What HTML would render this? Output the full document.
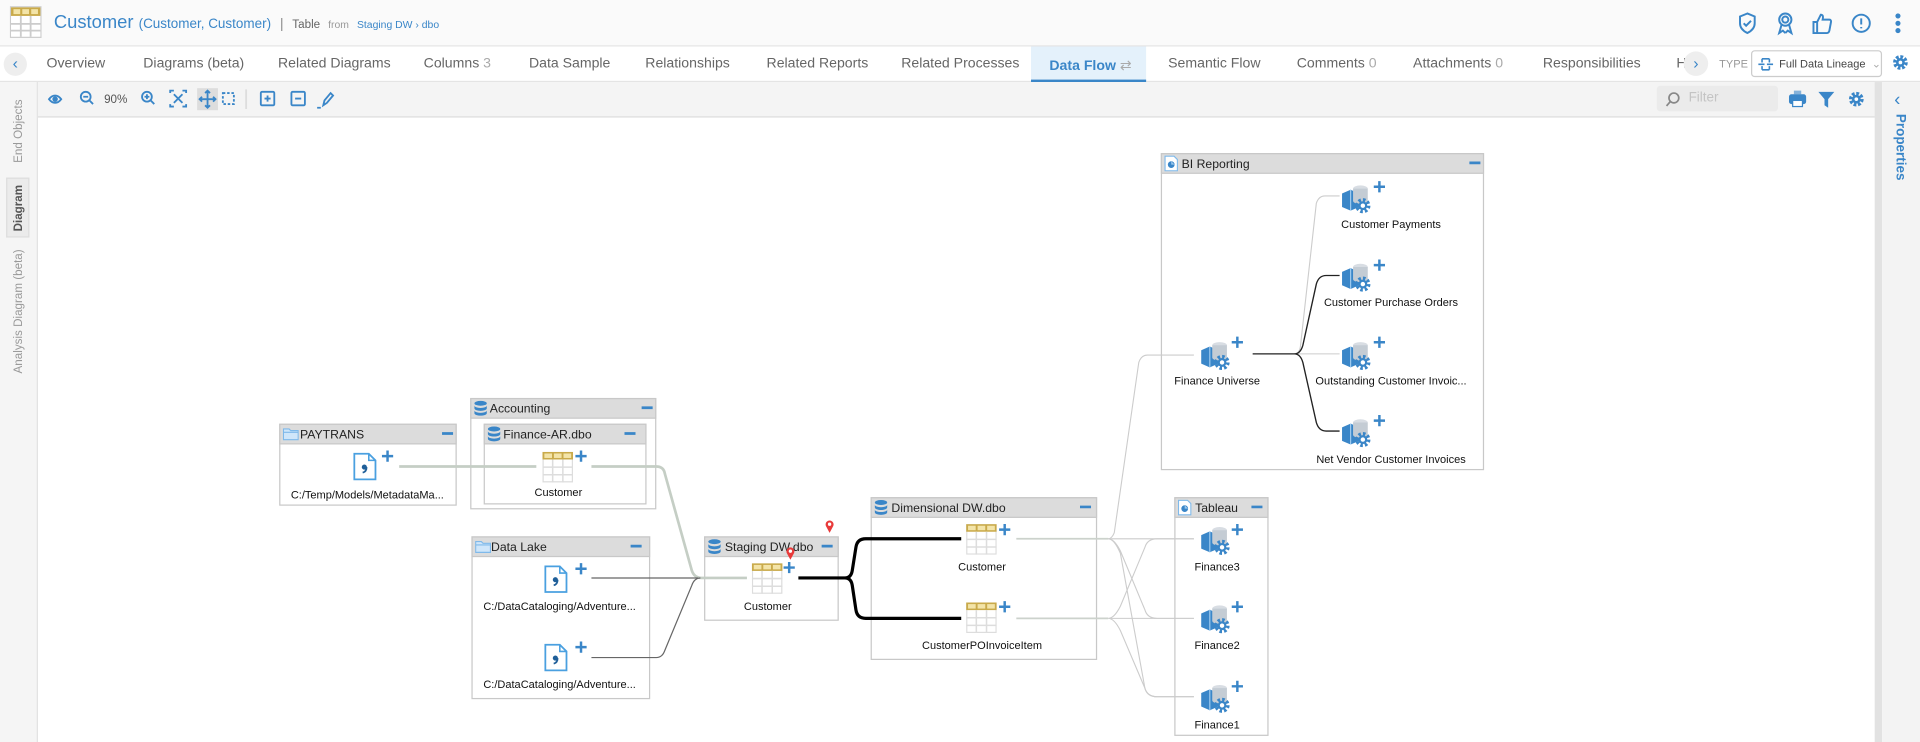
<!DOCTYPE html>
<html><head><meta charset="utf-8">
<style>
*{box-sizing:border-box;margin:0;padding:0}
html,body{width:1920px;height:742px;overflow:hidden;background:#fff;font-family:"Liberation Sans",sans-serif}
#w{position:absolute;left:0;top:0;width:1568px;height:606px;transform:scale(1.22449);transform-origin:0 0;background:#fff}
.abs{position:absolute}
#hdr{left:0;top:0;width:1568px;height:38px;background:#fafafa;border-bottom:1px solid #e4e4e4}
#tabs{left:0;top:38px;width:1568px;height:29px;background:#fff;border-bottom:1px solid #e4e4e4}
.tab{position:absolute;top:8px;font-size:11.5px;color:#666}
.tab .n{color:#aaa}
#tb{left:31px;top:67px;width:1501px;height:29px;background:#f4f4f4;border-bottom:1px solid #ddd}
#ls{left:0;top:67px;width:31px;height:539px;background:#f5f5f5;border-right:1px solid #e2e2e2}
#rs{left:1537px;top:67px;width:31px;height:539px;background:#f3f3f3}
#sb{left:1531px;top:67px;width:6px;height:539px;background:#e2e2e2}
.vt{position:absolute;transform:rotate(-90deg);transform-origin:0 0;font-size:9.5px;color:#999;white-space:nowrap}
</style></head><body><div id="w">
<div id="hdr" class="abs">
 <svg class="abs" style="left:8px;top:5px" width="26" height="26" viewBox="0 0 26 26">
  <rect x="0.5" y="0.5" width="25" height="25" fill="#fff" stroke="#ccc"/>
  <rect x="1" y="1" width="24" height="7" fill="#c9aa4a"/>
  <rect x="3" y="2.5" width="5.5" height="4" fill="#f3e4a8"/><rect x="10.2" y="2.5" width="5.5" height="4" fill="#f3e4a8"/><rect x="17.5" y="2.5" width="5.5" height="4" fill="#f3e4a8"/>
  <path d="M1 14.5H25M1 20H25M9 8V25M17 8V25" stroke="#ccc" stroke-width="1.5"/>
 </svg>
 <div class="abs" style="left:44px;top:10px;font-size:15px;color:#3a86c8;white-space:nowrap">Customer <span style="font-size:11px">(Customer, Customer)</span> <span style="font-size:11px;color:#888">&nbsp;|&nbsp;</span> <span style="font-size:9.5px;color:#666">Table</span> <span style="font-size:8.5px;color:#999">&nbsp;from&nbsp;</span> <span style="font-size:8.5px;color:#3a86c8">Staging DW › dbo</span></div>
 <svg class="abs" style="left:1418px;top:9px" width="145" height="20" viewBox="0 0 145 20" fill="none" stroke="#3a86c8" stroke-width="1.6">
  <path d="M9 2L3 4.5V10c0 4 3 6.5 6 8 3-1.5 6-4 6-8V4.5z"/><path d="M6 10l2 2 4-4"/>
  <circle cx="40" cy="7" r="5"/><circle cx="40" cy="7" r="2.5"/><path d="M37 11l-2 7 3-2 2 2M43 11l2 7-3-2-2 2"/>
  <path d="M63 9h3v9h-3zM66 9l3-6c2 0 2 2 1.5 4H76c1 0 1.6 1 1.3 2l-1.3 7c-.2 1-1 2-2 2H66"/>
  <circle cx="102" cy="10" r="7"/><path d="M102 6v5M102 13v1.2"/>
  <circle cx="132" cy="4" r="1.3" fill="#3a86c8"/><circle cx="132" cy="10" r="1.3" fill="#3a86c8"/><circle cx="132" cy="16" r="1.3" fill="#3a86c8"/>
 </svg>
</div>
<div id="tabs" class="abs">
 <div class="abs" style="left:3px;top:5px;width:19px;height:19px;border-radius:50%;background:#eee;color:#3a86c8;font-size:13px;text-align:center;line-height:18px">‹</div>
 <div class="tab" style="left:38px">Overview</div>
 <div class="tab" style="left:117px">Diagrams (beta)</div>
 <div class="tab" style="left:227px">Related Diagrams</div>
 <div class="tab" style="left:346px">Columns <span class="n">3</span></div>
 <div class="tab" style="left:432px">Data Sample</div>
 <div class="tab" style="left:527px">Relationships</div>
 <div class="tab" style="left:626px">Related Reports</div>
 <div class="tab" style="left:736px">Related Processes</div>
 <div class="abs" style="left:842px;top:0;width:94px;height:29px;background:#e4f1fb;border-bottom:2px solid #3a86c8"></div>
 <div class="tab" style="left:857px;color:#3a86c8;font-weight:bold">Data Flow <span style="color:#aaa;font-weight:normal">⇄</span></div>
 <div class="tab" style="left:954px">Semantic Flow</div>
 <div class="tab" style="left:1059px">Comments <span class="n">0</span></div>
 <div class="tab" style="left:1154px">Attachments <span class="n">0</span></div>
 <div class="tab" style="left:1260px">Responsibilities</div>
 <div class="tab" style="left:1369px">H</div>
 <div class="abs" style="left:1375px;top:4px;width:20px;height:20px;border-radius:50%;background:#eee;color:#3a86c8;font-size:13px;text-align:center;line-height:19px">›</div>
 <div class="abs" style="left:1404px;top:9px;font-size:9px;color:#999">TYPE</div>
 <div class="abs" style="left:1430px;top:3px;width:107px;height:22px;border:1px solid #ccc;border-radius:3px;background:#fff;font-size:9px;color:#444;padding:5px 0 0 22px;white-space:nowrap">Full Data Lineage <span style="color:#aaa">&nbsp;⌄</span></div>
 <svg class="abs" style="left:1435px;top:8px" width="14" height="13" viewBox="0 0 14 13" fill="none" stroke="#3a86c8" stroke-width="1.3"><path d="M4 2h6M4 11h6M4 2v3M10 2v3M4 8v3M10 8v3M1 6.5h5M8 6.5h5"/></svg>
 <svg class="abs" style="left:1545px;top:6px" width="14" height="14" viewBox="0 0 14 14"><circle cx="7" cy="7" r="4.5" fill="none" stroke="#3a86c8" stroke-width="3" stroke-dasharray="2.2 1.3"/><circle cx="7" cy="7" r="3.6" fill="#3a86c8"/><circle cx="7" cy="7" r="1.5" fill="#fff"/></svg>
</div>
<div id="ls" class="abs">
 <div class="vt" style="left:10px;top:66px">End Objects</div>
 <div class="abs" style="left:5px;top:78px;width:19px;height:49px;background:#ebebeb;border:1px solid #ddd"></div>
 <div class="vt" style="left:10px;top:122px;font-weight:bold;color:#555">Diagram</div>
 <div class="vt" style="left:10px;top:238px">Analysis Diagram (beta)</div>
</div>
<div id="tb" class="abs">
 <svg class="abs" style="left:0;top:0" width="260" height="29" viewBox="31 67 260 29" fill="none" stroke="#3a86c8" stroke-width="1.5">
  <path d="M40 81c3-4 7-4 10 0-3 4-7 4-10 0z"/><circle cx="45" cy="81" r="1.5" fill="#3a86c8"/>
  <circle cx="70" cy="79" r="4"/><path d="M73 82l3 3M68 79h4"/>
  <circle cx="120" cy="79" r="4"/><path d="M123 82l3 3M118 79h4M120 77v4"/>
  <path d="M139 76v-2h3M149 74h3v2M152 85v2h-3M142 87h-3v-2M142 77l7 7M149 77l-7 7"/>
  <rect x="161" y="72" width="17" height="18" fill="#ddd" stroke="none"/>
  <path d="M169.5 74v14M163 81h13M167.5 76l2-2 2 2M167.5 86l2 2 2-2M165 79l-2 2 2 2M174 79l2 2-2 2"/>
  <rect x="182" y="76" width="9" height="9" stroke-dasharray="2 1.5"/>
  <path d="M201 73v16" stroke="#ddd"/>
  <rect x="213" y="75" width="11" height="11" rx="1"/><path d="M216 80.5h5M218.5 78v5"/>
  <rect x="238" y="75" width="11" height="11" rx="1"/><path d="M241 80.5h5"/>
  <path d="M264 86l1-4 5-6 2 2-5 6zM259 88h3"/>
 </svg>
 <div class="abs" style="left:54px;top:9px;font-size:9.5px;color:#555">90%</div>
 <div class="abs" style="left:1322px;top:3px;width:99px;height:21px;background:#ebebeb;border-radius:3px;font-size:11px;color:#c4c4c4;padding:4px 0 0 26px">Filter</div>
 <svg class="abs" style="left:1328px;top:7px" width="14" height="14" viewBox="0 0 14 14" fill="none" stroke="#888" stroke-width="1.4"><circle cx="8" cy="6" r="4"/><path d="M5 9l-3 3.5"/></svg>
 <svg class="abs" style="left:1428px;top:5px" width="100" height="18" viewBox="0 0 100 18">
  <rect x="6" y="2" width="6" height="3" fill="#3a86c8" opacity=".6"/><rect x="2" y="5" width="14" height="8" rx="2" fill="#3a86c8"/><rect x="5" y="10" width="8" height="5" fill="#fff" stroke="#3a86c8" stroke-width="1"/>
  <path d="M26 3h13l-5 6v7l-3-2V9z" fill="#3a86c8"/>
  <circle cx="57" cy="9" r="4.5" fill="none" stroke="#3a86c8" stroke-width="3" stroke-dasharray="2.2 1.3"/><circle cx="57" cy="9" r="3.6" fill="#3a86c8"/><circle cx="57" cy="9" r="1.5" fill="#fff"/>
 </svg>
</div>
<div id="sb" class="abs"></div>
<div id="rs" class="abs">
 <div class="abs" style="left:10px;top:6px;color:#3a86c8;font-size:15px">‹</div>
 <div class="abs" style="top:26px;transform:rotate(90deg);transform-origin:0 0;left:21px;font-size:11px;font-weight:bold;color:#3a86c8">Properties</div>
</div>

<svg class="abs" style="left:0;top:0" width="1568" height="606" viewBox="0 0 1568 606" font-family="Liberation Sans, sans-serif" font-size="9">
<defs>
 <symbol id="tbl" viewBox="0 0 24 24"><rect x="0.5" y="0.5" width="23" height="23" fill="#fff" stroke="#ddd"/><rect x="0" y="0" width="24" height="6" fill="#c9aa4a"/><rect x="1.5" y="1.3" width="6" height="3.5" fill="#f3e4a8"/><rect x="9" y="1.3" width="6" height="3.5" fill="#f3e4a8"/><rect x="16.5" y="1.3" width="6" height="3.5" fill="#f3e4a8"/><path d="M0 12H24M0 18H24M8 6V24M16 6V24" stroke="#ddd" stroke-width="1.2"/></symbol>
 <symbol id="doc" viewBox="0 0 22 26"><path d="M1.5 1.5h13l6 6v17h-19z" fill="#fff" stroke="#4aa0e0" stroke-width="1.6"/><path d="M14.5 1.5v6h6" fill="none" stroke="#4aa0e0" stroke-width="1.4"/><circle cx="10.5" cy="13.5" r="2.3" fill="#1f5f99"/><path d="M12.5 13.5c0 3-1.5 4.5-3.5 5" stroke="#1f5f99" stroke-width="1.6" fill="none"/></symbol>
 <symbol id="cube" viewBox="0 0 26 26"><path d="M1 9l7-3 7 3v11l-7 3-7-3z" fill="#3a86c8"/><path d="M8 6v17" stroke="#9cc9ee" stroke-width="1"/><ellipse cx="16" cy="5" rx="6" ry="2.6" fill="#d8dde3"/><path d="M10 5v10c0 1.4 2.7 2.6 6 2.6s6-1.2 6-2.6V5" fill="#c4ccd4"/><circle cx="18" cy="19" r="4.6" fill="none" stroke="#3a86c8" stroke-width="3.2" stroke-dasharray="2 1.6"/><circle cx="18" cy="19" r="3.6" fill="#3a86c8"/><circle cx="18" cy="19" r="1.8" fill="#fff"/></symbol>
 <symbol id="plus" viewBox="0 0 12 12"><path d="M6 1v10M1 6h10" stroke="#3a86c8" stroke-width="2.2"/></symbol>
 <symbol id="db" viewBox="0 0 12 14"><ellipse cx="6" cy="2.5" rx="5.5" ry="2.2" fill="#3a86c8"/><path d="M.5 4.5v2.5c0 1.2 2.5 2.2 5.5 2.2s5.5-1 5.5-2.2V4.5c0 1.2-2.5 2.2-5.5 2.2S.5 5.7.5 4.5zM.5 8.8v2.5c0 1.2 2.5 2.2 5.5 2.2s5.5-1 5.5-2.2V8.8c0 1.2-2.5 2.2-5.5 2.2S.5 10 .5 8.8z" fill="#3a86c8"/></symbol>
 <symbol id="fold" viewBox="0 0 14 12"><path d="M.5 2h5l1.5 1.5h6.5v8H.5z" fill="#cfe6fa" stroke="#7fb9ea"/><path d="M.5 5h13" stroke="#7fb9ea"/></symbol>
 <symbol id="rep" viewBox="0 0 12 14"><path d="M.5.5h8l3 3v10H.5z" fill="#fff" stroke="#7fb9ea"/><circle cx="6" cy="8" r="3" fill="#3a86c8"/><path d="M6 5v3h3" fill="#9cc9ee"/></symbol>
 <symbol id="pin" viewBox="0 0 10 14"><path d="M5 13L1.5 6.5A3.8 3.8 0 1 1 8.5 6.5z" fill="#e83a3a"/><circle cx="5" cy="4.8" r="1.6" fill="#fff"/></symbol>
</defs>
<g fill="none">
 <g stroke="#c8c8c8" fill="#fff">
  <rect x="228.5" y="346.5" width="144" height="66"/>
  <rect x="384.5" y="325.5" width="151" height="90"/>
  <rect x="395.5" y="346.5" width="132" height="65"/>
  <rect x="385.5" y="438.5" width="145" height="132"/>
  <rect x="575.5" y="438.5" width="109" height="68"/>
  <rect x="711.5" y="406.5" width="184" height="132"/>
  <rect x="948.5" y="125.5" width="263" height="258"/>
  <rect x="959.5" y="406.5" width="76" height="194"/>
 </g>
 <g fill="#dcdcdc" stroke="#c8c8c8">
  <rect x="228.5" y="346.5" width="144" height="16"/>
  <rect x="384.5" y="325.5" width="151" height="16"/>
  <rect x="395.5" y="346.5" width="132" height="16"/>
  <rect x="385.5" y="438.5" width="145" height="16"/>
  <rect x="575.5" y="438.5" width="109" height="16"/>
  <rect x="711.5" y="406.5" width="184" height="16"/>
  <rect x="948.5" y="125.5" width="263" height="16"/>
  <rect x="959.5" y="406.5" width="76" height="16"/>
 </g>
 <g stroke="#3a86c8" stroke-width="2.2">
  <path d="M361 354h9M524 333h9M510 354h9M515 446h9M671 446h9M882 414h9M1200 133h9M1022 414h9"/>
 </g>
 <g stroke="#c5cec5" stroke-width="2.2">
  <path d="M326 381H438"/>
  <path d="M483 381H536Q542 381 543 387L565 466Q567 472 573 472H610"/>
 </g>
 <g stroke="#666" stroke-width="1"><path d="M483 472H570"/><path d="M483 537H536Q541 537 543 531L565 478Q567 472 572 472"/></g>
 <g stroke="#000" stroke-width="2.6"><path d="M652 472H690Q695 472 696 466L699 447Q700 440 707 440H785M690 472Q695 472 696 478L699 498Q700 505 707 505H785"/></g>
 <g stroke="#ccd2cc" stroke-width="1.4"><path d="M830 440H905M830 505H905"/></g>
 <g stroke="#ccc" stroke-width="0.9">
  <path d="M905 440Q908 440 910 435L930 296Q932 290 937 290H975"/>
  <path d="M905 440H975M905 440Q910 440 915 450L935 498Q937 505 945 505H975M905 440Q910 440 915 452L935 562Q937 569 945 569H975"/>
  <path d="M905 505Q910 505 915 495L935 447Q937 440 945 440H975M905 505H975M905 505Q910 505 915 515L935 562Q937 569 945 569H975"/>
  <path d="M1057 289Q1061 289 1062 283L1075 166Q1077 160 1082 160H1094M1057 289H1094"/>
 </g>
 <g stroke="#222" stroke-width="1.1"><path d="M1023 289H1057Q1062 289 1064 282L1075 232Q1077 225 1083 225H1094M1057 289Q1062 289 1064 296L1075 345Q1077 352 1083 352H1094"/></g>
</g>
<use href="#fold" x="231" y="348" width="13" height="12"/>
<use href="#db" x="387" y="327" width="11" height="13"/>
<use href="#db" x="398" y="348" width="11" height="13"/>
<use href="#fold" x="388" y="440" width="13" height="12"/>
<use href="#db" x="578" y="440" width="11" height="13"/>
<use href="#db" x="714" y="408" width="11" height="13"/>
<use href="#rep" x="951" y="127" width="11" height="13"/>
<use href="#rep" x="962" y="408" width="11" height="13"/>
<g fill="#222" font-size="10">
 <text x="245" y="358">PAYTRANS</text>
 <text x="400" y="337">Accounting</text>
 <text x="411" y="358">Finance-AR.dbo</text>
 <text x="401" y="450">Data Lake</text>
 <text x="592" y="450">Staging DW.dbo</text>
 <text x="728" y="418">Dimensional DW.dbo</text>
 <text x="965" y="137">BI Reporting</text>
 <text x="976" y="418">Tableau</text>
</g>
<use href="#doc" x="288" y="369" width="20" height="24"/><use href="#plus" x="311" y="367" width="11" height="11"/>
<use href="#tbl" x="443" y="369" width="25" height="25"/><use href="#plus" x="469" y="367" width="11" height="11"/>
<use href="#doc" x="444" y="461" width="20" height="24"/><use href="#plus" x="469" y="459" width="11" height="11"/>
<use href="#doc" x="444" y="525" width="20" height="24"/><use href="#plus" x="469" y="523" width="11" height="11"/>
<use href="#tbl" x="614" y="460" width="25" height="25"/><use href="#plus" x="639" y="458" width="11" height="11"/>
<use href="#pin" x="641" y="446" width="9" height="12"/><use href="#pin" x="673" y="424" width="9" height="12"/>
<use href="#tbl" x="789" y="428" width="25" height="25"/><use href="#plus" x="815" y="427" width="11" height="11"/>
<use href="#tbl" x="789" y="492" width="25" height="25"/><use href="#plus" x="815" y="490" width="11" height="11"/>
<use href="#cube" x="980" y="277" width="26" height="26"/><use href="#plus" x="1005" y="274" width="11" height="11"/>
<use href="#cube" x="1095" y="149" width="26" height="26"/><use href="#plus" x="1121" y="147" width="11" height="11"/>
<use href="#cube" x="1095" y="213" width="26" height="26"/><use href="#plus" x="1121" y="211" width="11" height="11"/>
<use href="#cube" x="1095" y="277" width="26" height="26"/><use href="#plus" x="1121" y="274" width="11" height="11"/>
<use href="#cube" x="1095" y="340" width="26" height="26"/><use href="#plus" x="1121" y="338" width="11" height="11"/>
<use href="#cube" x="980" y="428" width="26" height="26"/><use href="#plus" x="1005" y="427" width="11" height="11"/>
<use href="#cube" x="980" y="492" width="26" height="26"/><use href="#plus" x="1005" y="490" width="11" height="11"/>
<use href="#cube" x="980" y="557" width="26" height="26"/><use href="#plus" x="1005" y="555" width="11" height="11"/>
<g fill="#111" text-anchor="middle">
 <text x="300" y="407">C:/Temp/Models/MetadataMa...</text>
 <text x="456" y="405">Customer</text>
 <text x="457" y="498">C:/DataCataloging/Adventure...</text>
 <text x="457" y="562">C:/DataCataloging/Adventure...</text>
 <text x="627" y="498">Customer</text>
 <text x="802" y="466">Customer</text>
 <text x="802" y="530">CustomerPOInvoiceItem</text>
 <text x="994" y="314">Finance Universe</text>
 <text x="1136" y="186">Customer Payments</text>
 <text x="1136" y="250">Customer Purchase Orders</text>
 <text x="1136" y="314">Outstanding Customer Invoic...</text>
 <text x="1136" y="378">Net Vendor Customer Invoices</text>
 <text x="994" y="466">Finance3</text>
 <text x="994" y="530">Finance2</text>
 <text x="994" y="595">Finance1</text>
</g>
</svg>
</div></body></html>
